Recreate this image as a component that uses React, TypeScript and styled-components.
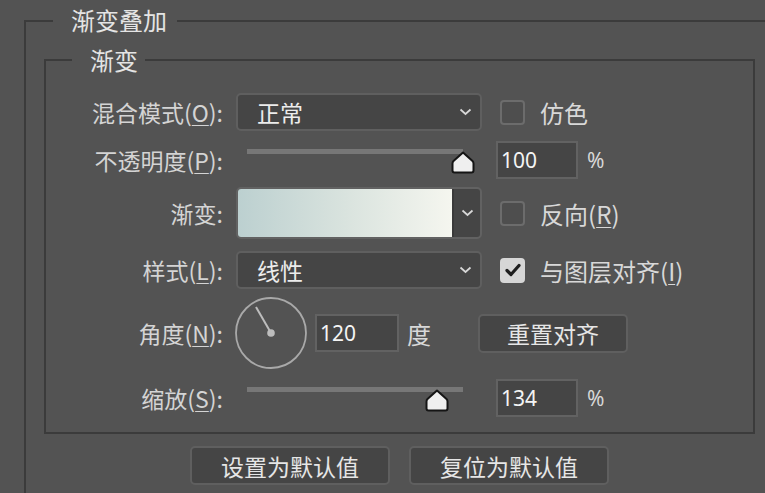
import React from "react";
import styled, { createGlobalStyle } from "styled-components";

const Global = createGlobalStyle`
  html, body { margin: 0; padding: 0; background: #535353; overflow: hidden; }
  body { width: 765px; height: 493px; font-family: "Noto Sans CJK SC", "Noto Sans", sans-serif; }
  * { box-sizing: border-box; }
`;

const FONT = `"Noto Sans CJK SC", "Noto Sans", sans-serif`;
const LINE = "#3b3b3b";

const Outer = styled.div`
  position: relative;
  margin: 20px 0 0 24px;
  height: 473px;
  border-left: 2px solid ${LINE};
  border-top: 2px solid ${LINE};
  padding: 37px 0 0 18px;
`;

const Legend = styled.div<{ $left: number; $top: number; $pl: number; $pr: number }>`
  position: absolute;
  left: ${(p) => p.$left}px;
  top: ${(p) => p.$top}px;
  padding: 0 ${(p) => p.$pr}px 0 ${(p) => p.$pl}px;
  background: #535353;
  color: #e4e4e4;
  font-family: ${FONT};
  font-size: 24px;
  line-height: 30px;
  white-space: nowrap;
`;

const Inner = styled.div`
  position: relative;
  width: 711px;
  border: 2px solid ${LINE};
  padding: 32px 0 15px 0;
`;

const Row = styled.div<{ $h: number; $mt: number }>`
  display: flex;
  align-items: center;
  height: ${(p) => p.$h}px;
  margin-top: ${(p) => p.$mt}px;
`;

const Label = styled.div`
  width: 177px;
  margin-right: 13px;
  text-align: right;
  color: #d4d4d4;
  font-family: ${FONT};
  font-size: 23px;
  white-space: nowrap;
  u { text-underline-offset: 3px; text-decoration-thickness: 1px; }
`;

const Select = styled.div`
  display: flex;
  align-items: center;
  justify-content: space-between;
  width: 246px;
  height: 38px;
  padding: 0 8px 0 19px;
  background: #454545;
  border: 2px solid #5f5f5f;
  border-radius: 5px;
  color: #ececec;
  font-family: ${FONT};
  font-size: 23px;
`;

const GradBox = styled.div`
  display: flex;
  width: 246px;
  height: 52px;
  border: 2px solid #626262;
  border-radius: 5px;
  overflow: hidden;
  background: #454545;
`;

const Swatch = styled.div`
  flex: 1;
  background: linear-gradient(90deg, #bcd0d0 0%, #d9e3de 50%, #f5f6ef 100%);
`;

const DropPart = styled.div`
  width: 28px;
  display: flex;
  align-items: center;
  justify-content: center;
  border-left: 2px solid #3a3a3a;
`;

const Check = styled.div<{ $on?: boolean }>`
  width: 25px;
  height: 25px;
  margin-left: 18px;
  margin-right: 15px;
  border-radius: 4px;
  border: 2px solid ${(p) => (p.$on ? "#d6d6d6" : "#6c6c6c")};
  background: ${(p) => (p.$on ? "#d6d6d6" : "#4e4e4e")};
  display: flex;
  align-items: center;
  justify-content: center;
`;

const Text = styled.span<{ $ml?: number }>`
  margin-left: ${(p) => p.$ml ?? 0}px;
  color: #d8d8d8;
  font-family: ${FONT};
  font-size: 24px;
  white-space: nowrap;
  u { text-underline-offset: 3px; text-decoration-thickness: 1px; }
`;

const SliderBox = styled.div`
  position: relative;
  align-self: stretch;
  width: 246px;
  padding: 8px 0 0 11px;
`;

const Track = styled.div`
  width: 216px;
  height: 5px;
  background: #777777;
`;

const Thumb = styled.svg`
  position: absolute;
  top: 10px;
`;

const NumInput = styled.div<{ $ml: number; $w: number }>`
  display: flex;
  align-items: center;
  width: ${(p) => p.$w}px;
  height: 38px;
  margin-left: ${(p) => p.$ml}px;
  padding-left: 3px;
  background: #454545;
  border: 2px solid #626262;
  color: #f4f4f4;
  font-family: "Noto Sans", sans-serif;
  font-size: 21px;
`;

const Unit = styled.span<{ $ml: number }>`
  margin-left: ${(p) => p.$ml}px;
  color: #d8d8d8;
  font-family: "Noto Sans", sans-serif;
  font-size: 21px;
`;

const Button = styled.div<{ $w: number; $ml?: number }>`
  display: flex;
  align-items: center;
  justify-content: center;
  width: ${(p) => p.$w}px;
  height: 39px;
  margin-left: ${(p) => p.$ml ?? 0}px;
  background: #454545;
  border: 2px solid #5f5f5f;
  border-radius: 5px;
  color: #e6e6e6;
  font-family: ${FONT};
  font-size: 23px;
`;

const Dial = styled.svg`
  margin-left: -2px;
`;

const ButtonRow = styled.div`
  display: flex;
  gap: 19px;
  margin: 12px 0 0 146px;
`;

const Chevron = () => (
  <svg width="13" height="8" viewBox="0 0 13 8">
    <path d="M1.5 1.5 L6.5 6 L11.5 1.5" fill="none" stroke="#d8d8d8" strokeWidth="1.7" />
  </svg>
);

const Tick = () => (
  <svg width="20" height="20" viewBox="0 0 20 20">
    <path d="M4 10.5 L8 14.5 L16 5.5" fill="none" stroke="#1e1e1e" strokeWidth="3.2" strokeLinecap="round" strokeLinejoin="round" />
  </svg>
);

const Slider = ({ pct }: { pct: number }) => (
  <SliderBox>
    <Track />
    <Thumb width="24" height="23" viewBox="0 0 24 23" style={{ left: 11 + pct * 216 - 12 }}>
      <path
        d="M12 1.5 L21.5 10 Q22.5 11 22.5 12.5 L22.5 19.5 Q22.5 21.5 20.5 21.5 L3.5 21.5 Q1.5 21.5 1.5 19.5 L1.5 12.5 Q1.5 11 2.5 10 Z"
        fill="#efefef"
        stroke="#151515"
        strokeWidth="2"
        strokeLinejoin="round"
      />
    </Thumb>
  </SliderBox>
);

export default function App() {
  return (
    <>
      <Global />
      <Outer>
        <Legend $left={27} $top={-17} $pl={18} $pr={10}>渐变叠加</Legend>
        <Inner>
          <Legend $left={26} $top={-16} $pl={18} $pr={7}>渐变</Legend>

          <Row $h={38} $mt={0}>
            <Label>混合模式(<u>O</u>):</Label>
            <Select>
              <span>正常</span>
              <Chevron />
            </Select>
            <Check />
            <Text>仿色</Text>
          </Row>

          <Row $h={38} $mt={10}>
            <Label>不透明度(<u>P</u>):</Label>
            <Slider pct={1} />
            <NumInput $ml={14} $w={82}>100</NumInput>
            <Unit $ml={9}>%</Unit>
          </Row>

          <Row $h={52} $mt={8}>
            <Label>渐变:</Label>
            <GradBox>
              <Swatch />
              <DropPart>
                <Chevron />
              </DropPart>
            </GradBox>
            <Check />
            <Text>反向(<u>R</u>)</Text>
          </Row>

          <Row $h={38} $mt={12}>
            <Label>样式(<u>L</u>):</Label>
            <Select>
              <span>线性</span>
              <Chevron />
            </Select>
            <Check $on>
              <Tick />
            </Check>
            <Text>与图层对齐(<u>I</u>)</Text>
          </Row>

          <Row $h={70} $mt={9}>
            <Label>角度(<u>N</u>):</Label>
            <Dial width="74" height="74" viewBox="0 0 74 74">
              <circle cx="37" cy="37" r="35" fill="none" stroke="#a9a9a9" strokeWidth="1.8" />
              <line x1="37" y1="37" x2="22" y2="11" stroke="#bdbdbd" strokeWidth="2" />
              <circle cx="37" cy="37" r="3.8" fill="#bdbdbd" />
            </Dial>
            <NumInput $ml={7} $w={84}>120</NumInput>
            <Text $ml={8}>度</Text>
            <Button $w={150} $ml={47}>重置对齐</Button>
          </Row>

          <Row $h={38} $mt={11}>
            <Label>缩放(<u>S</u>):</Label>
            <Slider pct={0.88} />
            <NumInput $ml={14} $w={82}>134</NumInput>
            <Unit $ml={9}>%</Unit>
          </Row>
        </Inner>
        <ButtonRow>
          <Button $w={200}>设置为默认值</Button>
          <Button $w={200}>复位为默认值</Button>
        </ButtonRow>
      </Outer>
    </>
  );
}
